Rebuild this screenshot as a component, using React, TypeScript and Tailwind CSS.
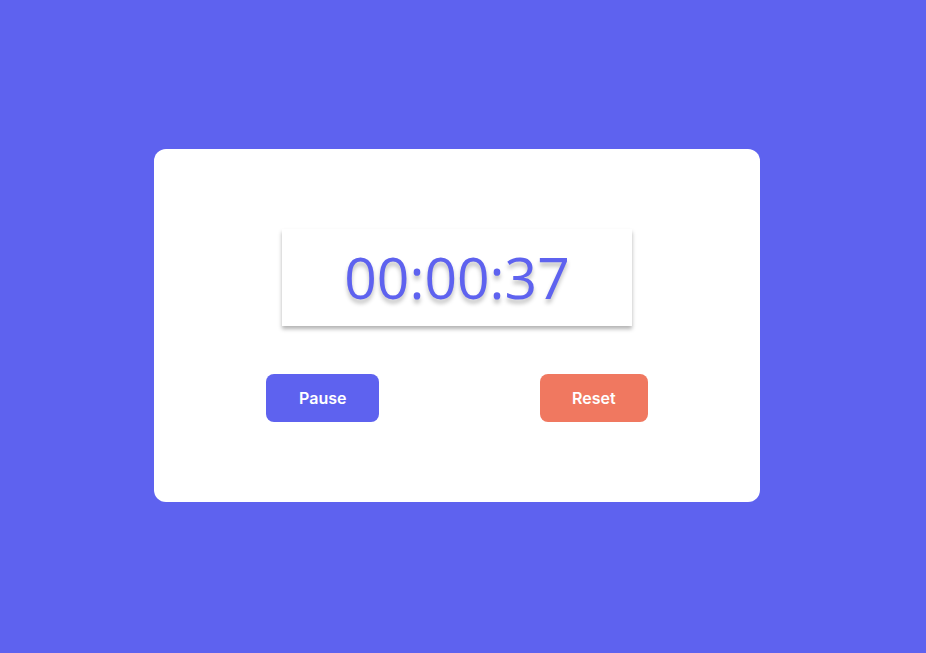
import React from "react";

export default function App() {
  return (
    <div className="w-full bg-[#5e62ef] flex items-center justify-center pr-[12px] pb-[2px] h-[653px]">
      <div className="w-[606px] h-[353px] bg-white rounded-[12px] flex flex-col items-center pt-[80px] px-[32px]">
        <div className="w-[350px] h-[97px] bg-white shadow-[0_3px_4px_rgba(0,0,0,0.3)] flex items-center justify-center">
          <span
            className="text-[57px] leading-none text-[#5e62ef] [text-shadow:0_4px_4px_rgba(0,0,0,0.25)]"
            style={{ fontFamily: '"Open Sans", sans-serif' }}
          >
            00:00:37
          </span>
        </div>
        <div className="w-full flex justify-around mt-[48px]" style={{ fontFamily: "Inter, sans-serif" }}>
          <button className="w-[113px] h-[48px] rounded-[8px] bg-[#5e62ef] text-white text-[16px] font-semibold">
            Pause
          </button>
          <button className="w-[108px] h-[48px] rounded-[8px] bg-[#f07860] text-white text-[16px] font-semibold">
            Reset
          </button>
        </div>
      </div>
    </div>
  );
}
